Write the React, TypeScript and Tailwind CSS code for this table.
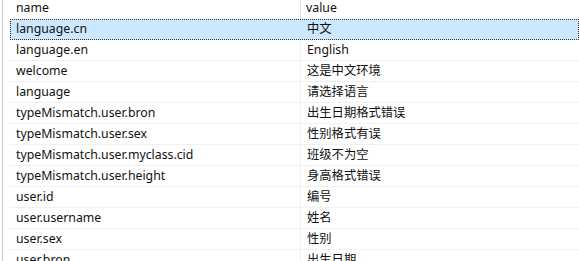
import React from "react";

const rows: [string, string][] = [
  ["language.cn", "中文"],
  ["language.en", "English"],
  ["welcome", "这是中文环境"],
  ["language", "请选择语言"],
  ["typeMismatch.user.bron", "出生日期格式错误"],
  ["typeMismatch.user.sex", "性别格式有误"],
  ["typeMismatch.user.myclass.cid", "班级不为空"],
  ["typeMismatch.user.height", "身高格式错误"],
  ["user.id", "编号"],
  ["user.username", "姓名"],
  ["user.sex", "性别"],
  ["user.bron", "出生日期"],
];

export default function App() {
  return (
    <div
      className="w-[579px] h-[261px] overflow-hidden bg-white flex text-[12.3px] text-[#111]"
      style={{ fontFamily: '"Noto Sans", "Noto Sans CJK SC", sans-serif' }}
    >
      <div className="w-[10px] shrink-0 flex">
        <div className="w-[2px]" />
        <div className="w-[1px] bg-[#c8c8c8]" />
      </div>
      <div className="flex-1 flex flex-col">
        <div className="h-[19px] flex shrink-0 leading-[15px]">
          <div className="w-[291px] pl-[6px] border-r border-[#e5e5e5]">name</div>
          <div className="flex-1 pl-[5px]">value</div>
        </div>
        {rows.map(([k, v], i) =>
          i === 0 ? (
            <div
              key={k}
              className="h-[21px] shrink-0 flex items-center bg-[#cce8ff] border border-dotted border-[#333]"
            >
              <div className="w-[290px] pl-[5px]">{k}</div>
              <div className="flex-1 pl-[6px]">{v}</div>
            </div>
          ) : (
            <div
              key={k}
              className="h-[21px] shrink-0 flex items-center border-b border-[#f0f0f0]"
            >
              <div className="w-[291px] h-full flex items-center pl-[6px] border-r border-[#f0f0f0]">{k}</div>
              <div className="flex-1 pl-[6px]">{v}</div>
            </div>
          )
        )}
      </div>
    </div>
  );
}
